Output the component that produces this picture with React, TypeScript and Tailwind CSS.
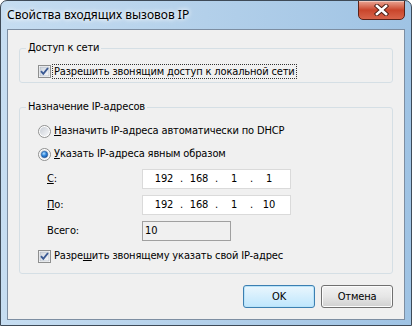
import type { ReactNode } from 'react';

const body = "font-['DejaVu_Sans_Condensed','DejaVu_Sans',sans-serif] text-[11px] leading-[14px] tracking-[-0.15px] text-black";

function CheckBox() {
  return (
    <svg width="13" height="13" viewBox="0 0 13 13" className="shrink-0">
      <defs>
        <linearGradient id="cbFill" x1="0" y1="0" x2="1" y2="1">
          <stop offset="0" stopColor="#cdd3dc" />
          <stop offset="1" stopColor="#f7f8fa" />
        </linearGradient>
      </defs>
      <rect x="0.5" y="0.5" width="12" height="12" fill="#ffffff" stroke="#8e8f8f" />
      <rect x="2" y="2" width="9" height="9" fill="url(#cbFill)" stroke="#a9b1bd" strokeWidth="0.6" />
      <path d="M3 6.2 L5.3 8.8 L10 3" fill="none" stroke="#3b5a94" strokeWidth="1.9" />
    </svg>
  );
}

function Radio({ checked }: { checked?: boolean }) {
  return (
    <svg width="13" height="13" viewBox="0 0 13 13" className="shrink-0">
      <defs>
        <linearGradient id="rdFill" x1="0" y1="0" x2="1" y2="1">
          <stop offset="0" stopColor="#c9ced6" />
          <stop offset="1" stopColor="#f6f7f9" />
        </linearGradient>
        <radialGradient id="rdDot" cx="0.4" cy="0.35" r="0.7">
          <stop offset="0" stopColor="#b8e0ff" />
          <stop offset="0.5" stopColor="#2e86dc" />
          <stop offset="1" stopColor="#1a4f9c" />
        </radialGradient>
      </defs>
      <circle cx="6.5" cy="6.5" r="6" fill="#ffffff" stroke="#8e8f8f" />
      <circle cx="6.5" cy="6.5" r="4.6" fill="url(#rdFill)" />
      {checked && <circle cx="6.5" cy="6.5" r="3.2" fill="url(#rdDot)" stroke="#1d4f8f" strokeWidth="0.5" />}
    </svg>
  );
}

function Group({ title, children, className }: { title: string; children: ReactNode; className?: string }) {
  return (
    <fieldset className={`rounded-[3px] border border-[#d5dfe5] ${className ?? ''}`}>
      <legend className="ml-[6px] px-[2px]">{title}</legend>
      {children}
    </fieldset>
  );
}

function IpBox({ parts }: { parts: string[] }) {
  return (
    <div className="flex h-[20px] w-[149px] items-center border border-[#dadada] bg-white pl-[7px]">
      {parts.map((p, i) => (
        <div key={i} className="flex items-center">
          {i > 0 && <span className="w-[7px] text-center">.</span>}
          <span className="w-[28px] text-center">{p}</span>
        </div>
      ))}
    </div>
  );
}

export default function App() {
  return (
    <div className="relative flex h-[326px] w-[412px] flex-col overflow-hidden rounded-t-[7px] border border-[#3e4a57] bg-gradient-to-r from-[#c6ddf1] via-[#b3d0ea] to-[#9fc3e4]">
      <div className="flex h-[28px] items-start justify-between">
        <span className="pl-[6px] pt-[6px] font-['Noto_Sans','Open_Sans',sans-serif] text-[12px] leading-[16px] text-black [text-shadow:0_0_6px_#ffffff,0_0_4px_#ffffff]">
          Свойства входящих вызовов IP
        </span>
        <div className="-mt-px mr-[6px] flex h-[20px] w-[47px] items-center justify-center rounded-b-[5px] border border-[#5b2218] bg-gradient-to-b from-[#e8a493] via-[#c9452b] to-[#d8644a] shadow-[inset_0_1px_0_#f3c7bb]">
          <svg width="15" height="12" viewBox="0 0 15 12">
            <path d="M3 2 L12 10 M12 2 L3 10" stroke="#4a1d14" strokeWidth="4.4" strokeLinecap="square" />
            <path d="M3 2 L12 10 M12 2 L3 10" stroke="#ffffff" strokeWidth="2.6" strokeLinecap="square" />
          </svg>
        </div>
      </div>

      <div className={`mx-[6px] mb-[5px] flex flex-1 flex-col border border-[#7d8ea2] bg-[#f0f0f0] px-[11px] pt-[11px] ${body}`}>
        <Group title="Доступ к сети" className="pb-[3px]">
          <div className="mt-[9px] flex items-center pl-[18px]">
            <CheckBox />
            <span className="ml-[1px] border border-dotted border-[#333] px-[1px] leading-[13px]">
              Разрешить звонящим доступ к локальной сети
            </span>
          </div>
        </Group>

        <Group title="Назначение IP-адресов" className="mt-[17px] pb-[10px]">
          <div className="mt-[10px] flex items-center gap-[3px] pl-[18px]">
            <Radio />
            <span>
              <span className="underline">Н</span>азначить IP-адреса автоматически по DHCP
            </span>
          </div>
          <div className="mt-[9px] flex items-center gap-[3px] pl-[18px]">
            <Radio checked />
            <span>
              <span className="underline">У</span>казать IP-адреса явным образом
            </span>
          </div>

          <div className="mt-[8px] flex items-center pl-[27px]">
            <span className="w-[95px]">
              <span className="underline">С</span>:
            </span>
            <IpBox parts={['192', '168', '1', '1']} />
          </div>
          <div className="mt-[6px] flex items-center pl-[27px]">
            <span className="w-[95px]">
              <span className="underline">П</span>о:
            </span>
            <IpBox parts={['192', '168', '1', '10']} />
          </div>
          <div className="mt-[6px] flex items-center pl-[27px]">
            <span className="w-[95px]">Всего:</span>
            <div className="flex h-[20px] w-[89px] items-center border border-[#a0a0a0] bg-[#f0f0f0] pl-[2px]">10</div>
          </div>

          <div className="mt-[8px] flex items-center gap-[3px] pl-[18px]">
            <CheckBox />
            <span>
              Разре<span className="underline">ш</span>ить звонящему указать свой IP-адрес
            </span>
          </div>
        </Group>

        <div className="mt-[11px] flex justify-end gap-[6px]">
          <button className="h-[23px] w-[72px] rounded-[3px] border border-[#3c7fb1] bg-gradient-to-b from-[#eaf6fd] to-[#bee6fd] font-normal shadow-[inset_0_0_0_1px_#b9e3f9]">
            OK
          </button>
          <button className="h-[23px] w-[72px] rounded-[3px] border border-[#707070] bg-gradient-to-b from-[#f2f2f2] via-[#e6e6e6] to-[#d0d0d0] font-normal shadow-[inset_0_0_0_1px_#fcfcfc]">
            Отмена
          </button>
        </div>
      </div>
    </div>
  );
}
